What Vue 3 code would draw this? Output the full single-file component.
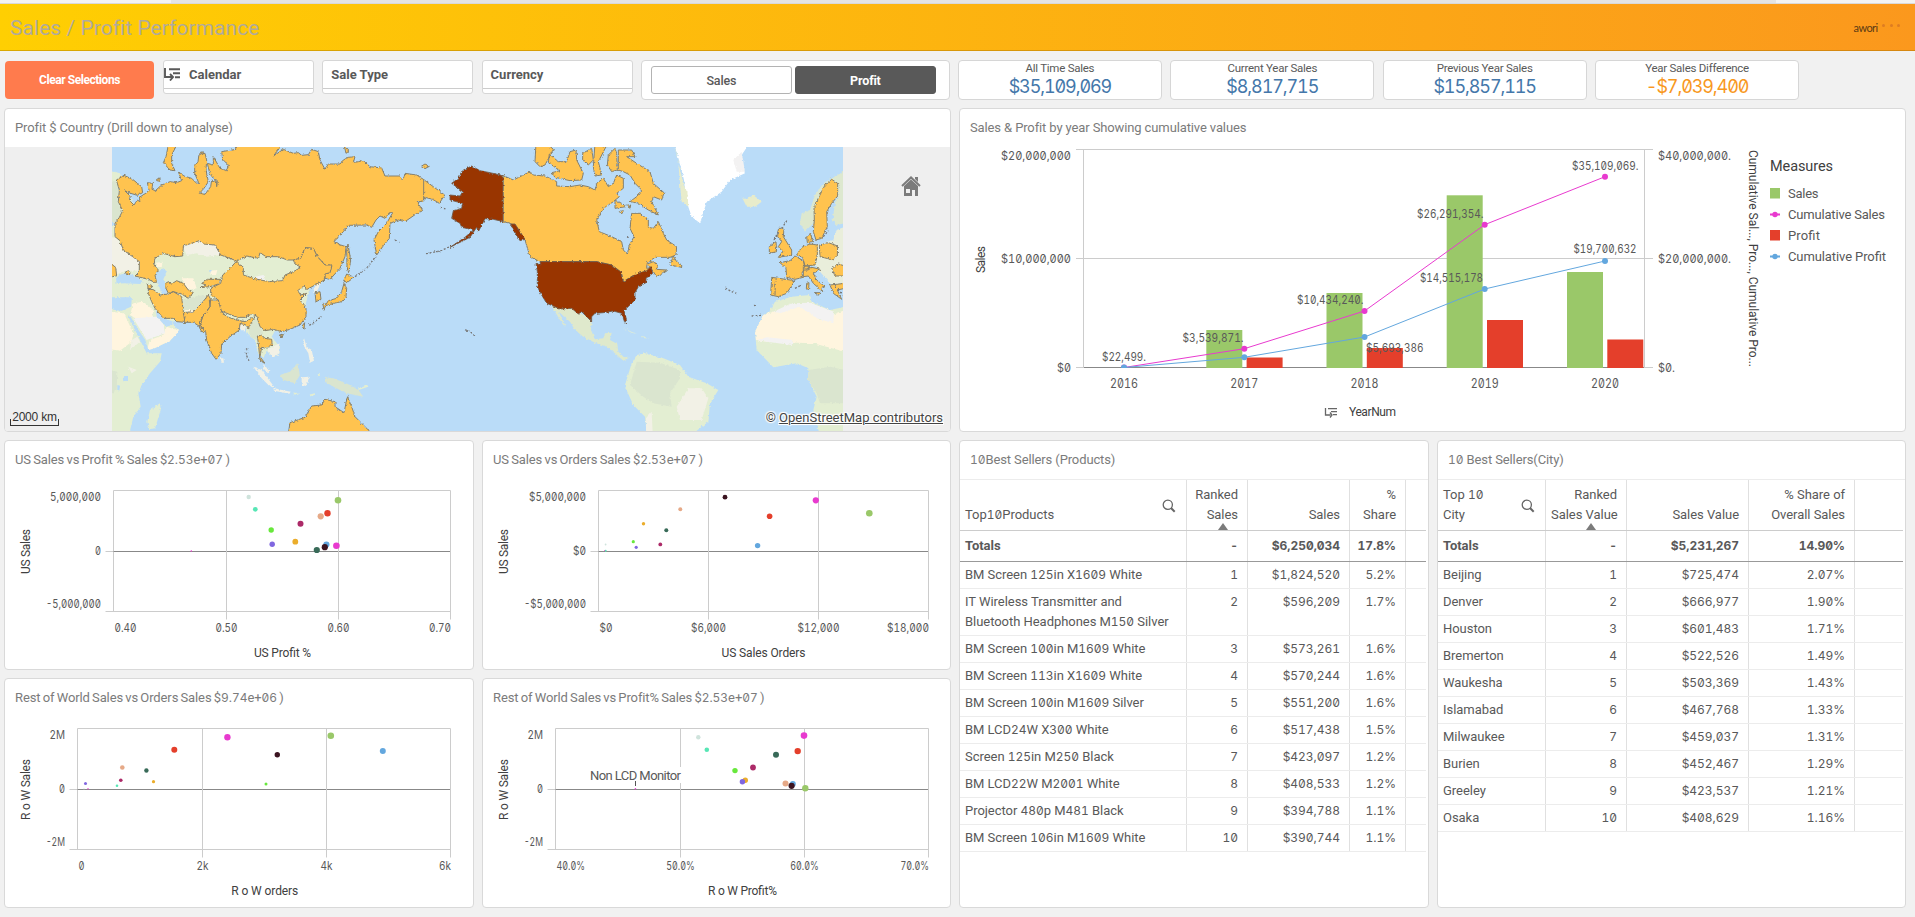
<script setup>
import { h } from 'vue'

// Splits a label so that figures get the slashed-zero numeral face.
const Label = (props) =>
  props.text
    .split(/([\d][\d.,]*)/)
    .filter((p) => p !== '')
    .map((p) => (/^\d/.test(p) ? h(props.tag || 'span', { class: 'fig' }, p) : p))
Label.props = ['text', 'tag']

const filters = [
  { name: 'Calendar', drill: true },
  { name: 'Sale Type' },
  { name: 'Currency' },
]
const kpis = [
  { label: 'All Time Sales', value: '$35,109,069' },
  { label: 'Current Year Sales', value: '$8,817,715' },
  { label: 'Previous Year Sales', value: '$15,857,115' },
  { label: 'Year Sales Difference', value: '-$7,039,400', warn: true },
]

const years = [
  { y: '2016', x: 1124 },
  { y: '2017', x: 1244.3, s: 330, p: 357.5 },
  { y: '2018', x: 1364.5, s: 293, p: 348 },
  { y: '2019', x: 1484.7, s: 195.3, p: 320 },
  { y: '2020', x: 1605, s: 272, p: 339.5 },
]
const cumSales = [[1124, 367.5], [1244.3, 348.7], [1364.5, 311], [1484.7, 224.7], [1605, 176.7]]
const cumProfit = [[1124, 367.5], [1244.3, 357.3], [1364.5, 337], [1484.7, 289], [1605, 261]]
const line = (pts) => pts.map((p) => p.join(',')).join(' ')
const pointLabels = [
  ['$22,499.', 1102, 361, 44], ['$3,539,871.', 1182.5, 342, 61], ['$10,434,240.', 1297, 304, 66.5],
  ['$26,291,354.', 1417, 218, 66.5], ['$14,515,178', 1420, 282, 63], ['$5,693,386', 1366, 352, 57.5],
  ['$35,109,069.', 1572, 170, 66.5], ['$19,700,632', 1573.5, 253, 63],
]
const leftAxis = [['$20,000,000', 160, 70], ['$10,000,000', 263, 70], ['$0', 372, 14]]
const rightAxis = [['$40,000,000.', 160, 73], ['$20,000,000.', 263, 73], ['$0.', 372, 17]]
const legend = [
  ['Sales', '#9ac869', 'bar', 30.5], ['Cumulative Sales', '#e83acf', 'line', 97],
  ['Profit', '#e43f2b', 'bar', 32], ['Cumulative Profit', '#63a7de', 'line', 98],
]

const C = {
  pale: '#cfe3dc', mint: '#57e6b5', olive: '#9ac869', red: '#e43f2b', peach: '#e6a987', wine: '#ac2a68',
  lime: '#68e83c', gold: '#ebad2b', violet: '#8067e0', blue: '#63a7de', pink: '#e83acf', black: '#3b1420', teal: '#386a58',
}
const scatters = [
  {
    title: 'US Sales vs Profit % Sales $2.53e+07 )', tw: 215, ox: 5, oy: 479, x0: 113.5, gx: [226.5, 338.5, 450.5], y0: 490.5,
    yl: [['5,000,000', 51], ['0', 6], ['-5,000,000', 55]], xl: [['0.40', 22], ['0.50', 22], ['0.60', 22], ['0.70', 22]],
    xt: ['US Profit %', 57], yt: ['US Sales', 45], cx: 282.5, ytx: 30,
    pts: [[248.7, 497, 2.2, C.pale], [255.3, 509.3, 2.4, C.mint], [338, 500.2, 3.3, C.olive], [327.5, 513.2, 3.2, C.red],
      [320.7, 516.3, 3.1, C.peach], [300.5, 523.7, 3, C.wine], [271.2, 530, 2.7, C.lime], [295.3, 541.7, 2.9, C.gold],
      [272.2, 544.3, 2.7, C.violet], [326.4, 544.5, 3.1, C.blue], [336.4, 545.7, 3.3, C.pink], [316.8, 550, 3.1, C.teal],
      [324.8, 547.2, 3.1, C.black], [191.3, 551, 0.8, C.pink]],
  },
  {
    title: 'US Sales vs Orders Sales $2.53e+07 )', ox: 483, oy: 479, x0: 598.5, gx: [708.5, 818.5, 928.5], y0: 490.5,
    yl: [['$5,000,000', 57], ['$0', 13], ['-$5,000,000', 62]], xl: [['$0', 13], ['$6,000', 35], ['$12,000', 42], ['$18,000', 42]],
    xt: ['US Sales Orders', 84], yt: ['US Sales', 45], cx: 763.5, ytx: 508,
    pts: [[725, 497.2, 2.4, C.black], [815.8, 500.3, 3.1, C.pink], [680.3, 509.3, 2, C.peach], [869.3, 513.3, 3.3, C.olive],
      [769.6, 516.3, 2.8, C.red], [643.5, 523.7, 1.7, C.gold], [666.3, 530.2, 2, C.teal], [633.3, 541.7, 1.6, C.lime],
      [660.3, 544.4, 1.9, C.wine], [757.6, 545.6, 2.7, C.blue], [636.2, 547.3, 1.6, C.violet], [605.6, 544.5, 0.9, C.pale],
      [605.7, 550.8, 1, C.mint], [604.7, 550.5, 0.5, C.pink]],
  },
  {
    title: 'Rest of World Sales vs Orders Sales $9.74e+06 )', ox: 5, oy: 717, x0: 77.5, gx: [202.5, 326.5, 450.5], y0: 728.5,
    yl: [['2M', 15.5], ['0', 6], ['-2M', 19]], xl: [['0', 6], ['2k', 12], ['4k', 12], ['6k', 12]],
    xt: ['R o W orders', 67], yt: ['R o W Sales', 61], cx: 264.8, ytx: 30,
    pts: [[227.4, 737.3, 3.2, C.pink], [330.8, 735.7, 3.3, C.olive], [382.8, 751, 3, C.blue], [174.3, 749.7, 3, C.red],
      [277.3, 754.8, 2.7, C.black], [122.3, 767.5, 2.3, C.peach], [146.4, 770.5, 2.2, C.teal], [120.8, 780.3, 1.8, C.wine],
      [153.5, 781.7, 1.6, C.gold], [117, 785.7, 1.3, C.mint], [85.5, 783.5, 1.5, C.violet], [266, 784, 1.5, C.lime], [88, 788.8, 0.7, C.pink], [84, 788.8, 0.6, C.pale]],
  },
  {
    title: 'Rest of World Sales vs Profit% Sales $2.53e+07 )', ox: 483, oy: 717, x0: 555.5, gx: [680.5, 804.5, 928.5], y0: 728.5,
    yl: [['2M', 15.5], ['0', 6], ['-2M', 19]], xl: [['40.0%', 28.5], ['50.0%', 28.5], ['60.0%', 28.5], ['70.0%', 28.5]],
    xt: ['R o W Profit%', 69], yt: ['R o W Sales', 61], cx: 742.5, ytx: 508, callout: true,
    pts: [[698.3, 737.3, 2.2, C.pale], [706.8, 749.7, 2.3, C.mint], [804, 735.6, 3.3, C.pink], [797.7, 751.1, 3.2, C.red],
      [776, 754.8, 3, C.teal], [753, 767.5, 2.9, C.wine], [735, 770.6, 2.7, C.lime], [745.3, 780.3, 2.7, C.gold],
      [742.4, 781.7, 2.7, C.violet], [785.5, 783.5, 3, C.peach], [792.8, 784, 3, C.blue], [791.6, 785.8, 3.1, C.black],
      [805.3, 788.3, 3.2, C.olive], [635.4, 788.8, 0.8, C.pink]],
  },
]

const products = {
  kind: 'products', title: '10Best Sellers (Products)',
  head: [['Top10Products'], ['Ranked', 'Sales'], ['Sales'], ['%', 'Share']],
  totals: ['Totals', '-', '$6,250,034', '17.8%'],
  rows: [
    ['BM Screen 125in X1609 White', '1', '$1,824,520', '5.2%'],
    ['IT Wireless Transmitter and Bluetooth Headphones M150 Silver', '2', '$596,209', '1.7%'],
    ['BM Screen 100in M1609 White', '3', '$573,261', '1.6%'],
    ['BM Screen 113in X1609 White', '4', '$570,244', '1.6%'],
    ['BM Screen 100in M1609 Silver', '5', '$551,200', '1.6%'],
    ['BM LCD24W X300 White', '6', '$517,438', '1.5%'],
    ['Screen 125in M250 Black', '7', '$423,097', '1.2%'],
    ['BM LCD22W M2001 White', '8', '$408,533', '1.2%'],
    ['Projector 480p M481 Black', '9', '$394,788', '1.1%'],
    ['BM Screen 106in M1609 White', '10', '$390,744', '1.1%'],
  ],
}
const cities = {
  kind: 'cities', title: '10 Best Sellers(City)',
  head: [['Top 10', 'City'], ['Ranked', 'Sales Value'], ['Sales Value'], ['% Share of', 'Overall Sales']],
  totals: ['Totals', '-', '$5,231,267', '14.90%'],
  rows: [
    ['Beijing', '1', '$725,474', '2.07%'], ['Denver', '2', '$666,977', '1.90%'], ['Houston', '3', '$601,483', '1.71%'],
    ['Bremerton', '4', '$522,526', '1.49%'], ['Waukesha', '5', '$503,369', '1.43%'], ['Islamabad', '6', '$467,768', '1.33%'],
    ['Milwaukee', '7', '$459,037', '1.31%'], ['Burien', '8', '$452,467', '1.29%'], ['Greeley', '9', '$423,537', '1.21%'],
    ['Osaka', '10', '$408,629', '1.16%'],
  ],
}
</script>

<template>
  <div class="page">
    <div class="strip"><i></i></div>
    <header class="banner">
      <h1>Sales / Profit Performance</h1>
      <div class="logo">awori<i></i><i></i><i></i></div>
    </header>

    <div class="toolbar">
      <button class="clear">Clear Selections</button>
      <div v-for="f in filters" :key="f.name" class="filter">
        <div class="filter-name" :class="{ drill: f.drill }">
          <svg v-if="f.drill" width="17" height="13" viewBox="0 0 17 13"><path d="M1 0v9h7M6 6l3 3-3 3.5M5 1.2h11M9 5.2h7M11 9.2h5" fill="none" stroke="#595959" stroke-width="1.9" /></svg>
          <span>{{ f.name }}</span>
        </div>
      </div>
      <div class="switch">
        <button>Sales</button>
        <button class="on">Profit</button>
      </div>
      <div v-for="k in kpis" :key="k.label" class="kpi">
        <span class="kpi-label">{{ k.label }}</span>
        <span class="kpi-value" :class="{ warn: k.warn }">{{ k.value }}</span>
      </div>
    </div>

    <div class="upper">
      <section class="panel wide">
        <h2>Profit $ Country (Drill down to analyse)</h2>
        <div class="map">
          <svg width="945" height="284" viewBox="0 0 2835 852">
            <defs>
              <filter id="coast" x="0" y="0" width="100%" height="100%" filterUnits="userSpaceOnUse">
                <feTurbulence type="fractalNoise" baseFrequency="0.14" numOctaves="2" seed="4" />
                <feDisplacementMap in="SourceGraphic" scale="9" xChannelSelector="R" yChannelSelector="G" />
              </filter>
              <clipPath id="world"><rect x="321" y="0" width="2193" height="852" /></clipPath>
            </defs>
            <rect width="2835" height="852" fill="#efefef" />
            <rect x="321" width="2193" height="852" fill="#badcf8" />
            <g clip-path="url(#world)">
              <g filter="url(#coast)">
                <g transform="translate(-15 -21)">
                  <path fill="#e3eed2" d="M330 92 360 100 450 300 1000 320 975 420 955 432 930 440 905 540 840 575 825 572 815 590 840 622 838 640 820 652 800 632 792 650 775 645 765 600 745 585 735 560 720 550 600 500 520 545 500 538 468 512 470 530 490 552 505 560 518 550 536 572 510 602 465 624 440 632 415 585 376 522 330 515z" />
                  <path fill="#dae5cf" d="M330 120 352 125 368 212 345 250 330 248zM548 480 585 470 610 465 625 470 600 500 575 515 550 512zM745 560 768 535 780 560 790 580 770 600 750 590z" />
                  <path fill="#f2f1e6" d="M330 290 350 295 370 330 418 365 415 392 375 392 345 405 330 360zM548 318 598 302 645 315 662 345 620 350 590 340 560 345zM950 430 965 425 950 455 938 455zM800 630 838 610 838 640 820 652zM720 550 738 560 733 575 720 565z" />
                  <path fill="#fff5df" d="M400 490 430 485 460 510 455 545 430 550 390 525zM450 600 490 585 500 560 538 572 510 602 465 624 440 632zM545 415 580 415 590 445 560 450zM630 392 652 390 648 405 632 405zM468 368 488 365 485 382 470 380zM552 510 580 510 570 520z" />
                  <path fill="#f3f2f2" d="M400 535 470 530 490 552 495 580 440 600zM765 410 790 405 795 420 770 418z" />
                  <path fill="#badcf8" d="M348 415 358 405 380 398 410 410 430 425 420 432 370 430 350 432zM330 472 396 472 393 500 365 512 330 508zM470 398 490 385 501 395 490 418 502 445 500 462 485 465 478 440 466 415zM376 522 392 530 415 570 436 600 445 630 485 628 480 640 448 645 430 622 400 575zM626 392 636 388 632 398zM330 246 347 246 345 258 330 258z" />
                  <path fill="#e3eed2" d="M330 512 380 520 405 570 425 610 440 640 485 640 480 665 450 700 425 735 415 760 422 800 400 830 388 880 330 880zM480 790 482 810 465 865 448 868 442 845 450 810z" />
                  <path fill="#fff5df" d="M330 515 372 520 400 580 395 605 360 632 330 628z" />
                  <path fill="#dae5cf" d="M330 690 352 695 350 750 330 765zM840 705 870 695 892 670 900 705 885 730 850 720zM975 712 1000 715 1050 735 1075 750 1090 770 1040 760 1000 740 975 725z" />
                  <path fill="#badcf8" d="M368 712 384 708 384 722 370 724zM352 735 360 737 358 752 352 748z" />
                  <path fill="#f2f1e6" d="M395 600 412 590 420 605 390 630zM385 680 410 690 395 700zM912 595 920 620 935 630 942 662 930 668 925 640 910 615zM760 680 785 690 820 737 812 742 785 715zM790 672 808 692 803 700 790 685zM820 745 872 755 868 761 822 752zM905 712 930 710 918 738 905 735zM662 655 670 655 672 668 665 668z" />
                  <path fill="none" stroke="#e3eed2" stroke-width="5" d="M1075 748 1104 738M930 766 945 762M880 760 895 762M955 700 958 708" />
                  <g fill="#ffc350" stroke="#85806e" stroke-width="3" stroke-linejoin="round">
                    <path d="M349 120 372 106 398 118 425 140 428 158 412 166 392 160 374 152 390 168 392 185 402 195 412 180 420 185 418 172 440 158 447 150 442 128 458 130 456 148 466 152 485 135 510 125 530 128 545 122 535 95 552 108 575 115 590 130 596 128 584 100 584 78 594 65 597 42 615 40 620 60 618 90 625 125 612 145 598 160 615 163 632 140 635 120 650 125 650 140 652 122 635 110 628 95 622 70 640 75 640 50 660 85 680 92 685 75 668 58 665 35 708 28 712 10 850 10 820 48 850 28 880 40 895 38 905 46 925 44 935 28 955 35 960 60 975 88 985 72 1020 72 1030 60 1045 52 1065 50 1060 68 1090 62 1110 80 1145 84 1155 108 1200 108 1210 120 1215 100 1250 105 1270 118 1300 140 1334 165 1318 190 1298 178 1275 172 1268 184 1252 185 1268 212 1248 222 1215 245 1195 240 1170 250 1168 295 1148 320 1130 345 1122 300 1135 275 1160 250 1178 218 1168 218 1155 235 1140 228 1128 240 1115 262 1100 255 1045 256 1030 275 1002 305 1022 315 1038 320 1035 350 1020 385 990 418 975 415 975 402 990 398 996 375 975 375 952 350 940 325 915 323 902 355 880 360 862 360 835 350 798 350 780 338 775 355 740 348 710 363 690 355 662 345 645 315 610 312 598 302 550 318 548 348 525 350 490 340 465 355 462 375 475 390 465 405 470 430 445 418 405 408 418 395 418 365 398 350 370 330 360 302 345 290 345 250 358 232 368 212 355 185 358 150z" />
                    <path d="M1271 118V184M505 15 530 15 515 45 515 70 525 92 510 90 490 68 498 50zM1265 78 1275 72 1288 79 1275 86zM1032 15 1048 32 1038 40zM470 118 480 114 480 124 470 122zM602 36 610 36 608 44zM376 396 386 392 390 402 380 404zM325 365 347 382 350 408 325 412z" />
                    <path d="M710 363 730 385 730 405 760 415 805 425 848 422 855 405 880 395 903 382 885 372 880 360 902 355 915 323 940 325 952 350 975 375 996 375 990 398 975 402 973 420 945 435 918 450 915 435 893 452 902 465 920 460 900 480 918 505 918 530 900 555 870 568 845 575 820 568 795 572 780 560 770 528 755 522 735 532 710 532 668 518 650 495 655 480 632 462 632 445 662 430 668 405 690 385z" />
                    <path d="M445 445 462 450 480 465 505 462 520 455 545 470 548 500 552 530 555 547 530 545 520 535 490 535 465 505 455 485 445 460zM442 432 455 436 455 448 444 445zM497 430 505 425 515 432 530 422 550 430 565 450 580 458 565 475 545 462 520 455 505 460 498 445zM605 430 625 418 662 418 655 432 630 440 600 443 618 435z" />
                    <path d="M552 547 555 530 550 518 580 515 605 490 625 465 632 478 630 500 608 530 600 555 612 568 580 547zM628 480 655 480 660 500 668 522 710 540 735 545 765 530 745 565 738 555 720 550 718 570 690 590 665 612 663 640 648 658 635 640 620 600 617 575 605 575 597 560 608 530 630 500z" />
                    <path fill="#e3eed2" d="M665 514 712 532 710 540 680 530z" />
                    <path d="M772 588 785 585 795 595 815 598 817 615 800 625 785 622 780 650 795 670 780 660 778 640 775 610zM838 585 850 582 846 594zM906 558 914 548 912 568zM945 458 960 455 963 478 948 485zM1032 430 1040 445 1038 470 1025 485 1000 490 975 498 985 482 1010 475 1025 455zM968 490 978 495 972 508zM1040 402 1062 412 1045 425 1030 425zM1044 312 1052 360 1046 398 1041 380 1040 330z" />
                    <path d="M865 880 870 848 915 832 935 798 965 795 975 778 1005 785 1005 800 1032 818 1042 770 1055 800 1065 830 1115 880z" />
                  </g>
                  <g fill="none" stroke="#777" stroke-width="4" stroke-dasharray="6 5"><path d="M1065 410 1100 385 1128 348M1278 341 1320 333 1350 320M1395 570 1408 573M1412 576 1425 588M928 556 965 530M740 625 739 645 748 665M1185 300 1198 308M1320 202 1338 207" /></g>
                  <path fill="#993404" stroke="#6d5a48" stroke-width="2.5" d="M1415 78 1440 92 1470 98 1510 107 1510 245 1480 238 1455 236 1435 275 1430 262 1410 292 1350 322 1395 292 1420 270 1385 262 1380 250 1355 235 1360 212 1385 205 1388 190 1350 180 1350 165 1380 168 1388 155 1355 130 1375 115 1390 90z" />
                </g>
                <g transform="translate(1425 -21)">
                  <path fill="#e8eccb" d="M582 15 595 60 598 110 605 165 620 190 610 130z" />
                  <path fill="#fff" d="M583 15 805 15 775 60 795 100 750 120 725 155 680 185 660 250 635 230 618 180 612 120 597 60z" />
                  <path fill="#f3f2f2" d="M760 60 785 35 795 95 770 95z" />
                  <path fill="#e8eccb" d="M785 170 800 178 820 165 845 185 825 200 800 200zM600 130 622 150 625 200 605 185z" />
                  <path fill="#dfe9cc" d="M215 498 275 505 320 530 335 545 333 570 345 598 370 595 375 580 395 578 390 600 412 612 415 635 435 655 450 652 430 662 405 640 380 620 345 608 310 590 285 570 270 545 236 515 258 560 240 540z" />
                  <path fill="#e3eed2" d="M430 565 470 582 455 578zM485 588 508 596 490 594zM435 735 455 670 470 645 495 640 550 655 600 675 625 710 680 730 715 750 690 790 685 845 640 880 500 880 495 830 460 795 437 745z" />
                  <path fill="#dae5cf" d="M470 665 540 668 600 690 600 715 570 760 575 800 520 790 490 770 450 735z" />
                  <path fill="#f2f1e6" d="M625 745 665 745 685 775 665 840 600 840 590 800zM498 835 515 815 518 880 498 880z" />
                  <path fill="#e3eed2" d="M868 515 885 485 935 470 990 465 995 485 1050 510 1095 500 1095 880 1018 880 1000 810 1010 770 985 720 985 685 950 670 880 682 830 630 825 575 850 525z" />
                  <path fill="#fff5df" d="M825 575 850 525 880 515 930 498 970 490 1020 540 1095 510 1095 635 1000 610 860 605 828 600z" />
                  <path fill="#f3f2f2" d="M880 515 935 490 990 488 1062 515 1060 550 1010 535 960 500 900 520zM832 600 860 592 940 600 935 615 860 605z" />
                  <path fill="#dae5cf" d="M985 690 1050 680 1095 690 1095 790 1020 790 1010 760 985 720z" />
                  <path fill="#dde8cf" d="M960 250 965 220 990 210 1005 165 1030 130 1095 92 1095 250 1068 255 1058 240 1065 190 1075 165 1060 160 1020 210 1000 250 975 275z" />
                  <path fill="#e9eedb" d="M965 345 1012 315 1060 300 1070 270 1095 260 1095 430 1055 435 1020 395 1000 370z" />
                  <g fill="#ffc350" stroke="#85806e" stroke-width="3" stroke-linejoin="round">
                    <path d="M70 107 100 120 130 105 150 95 160 105 195 108 230 125 230 138 270 140 300 135 325 140 345 150 350 130 370 115 385 140 400 130 410 105 430 115 430 145 410 160 418 170 400 185 385 195 370 205 350 240 358 275 395 290 425 305 430 330 442 342 448 315 462 290 450 265 455 220 480 220 505 240 505 262 520 265 535 245 550 280 560 300 590 320 588 345 570 352 525 352 502 368 500 385 515 382 500 395 465 405 430 425 425 400 395 375 350 365 180 365 150 350 135 300 110 262 90 250 70 245z" />
                    <path d="M208 42 235 65 260 65 270 35 288 30 290 60 310 100 305 120 270 122 225 112 215 98 240 92 205 68zM168 10 200 10 220 28 195 75 180 80 165 65zM308 40 335 25 340 60 325 75 308 60zM345 10 378 20 355 65 365 105 345 108 340 80z" />
                    <path d="M385 45 405 25 410 40 412 90 395 95 382 75zM415 30 455 30 465 50 440 50 470 70 510 95 520 130 552 158 545 180 520 170 515 185 535 225 505 210 475 190 450 185 470 170 485 150 465 130 450 105 430 95 415 90 415 60zM405 180 438 200 405 205zM418 215 430 212 425 222zM440 195 452 195 450 205z" />
                    <path d="M502 372 520 365 535 378 528 388 560 390 530 410 520 395zM570 375 580 348 590 365 605 375 605 382z" />
                    <path d="M1002 200 1035 135 1055 118 1073 130 1073 168 1055 190 1040 215 1042 260 1025 295 1008 300 1000 275 1003 240zM895 265 912 265 910 290 935 330 935 345 895 352 908 335 895 320 905 305 893 290zM868 320 888 305 890 335 868 340zM900 368 930 362 945 348 970 362 975 385 965 400 970 412 945 418 920 412 918 385zM875 412 945 422 920 460 895 470 872 465zM886 425 885 465M950 345 965 322 990 312 1012 315 1012 345 1005 375 975 378 968 352zM980 290 992 280 998 305 982 308zM1018 315 1045 308 1073 318 1072 345 1060 360 1020 350zM970 390 995 382 1022 388 1000 400 1010 420 1035 440 1025 445 1028 455 1000 430 985 408 970 410zM1055 385 1075 372 1095 378 1095 408 1065 408zM1050 435 1095 430 1095 445 1072 450 1085 478 1060 460zM980 430 987 428 986 448 979 446zM1003 458 1020 458 1015 466zM970 378 985 378 985 390 970 390z" />
                  </g>
                  <path fill="none" stroke="#777" stroke-width="4" stroke-dasharray="6 5" d="M736 444 755 455 775 462M815 528 845 526M822 497 830 495M905 265 922 240M895 275 882 300M945 445 965 435M1030 290 1045 272M1065 440 1089 465M442 290 446 296" />
                  <path fill="#993404" stroke="#6d5a48" stroke-width="2.5" d="M180 365 350 365 395 375 422 395 430 425 465 403 500 392 513 380 518 400 498 415 498 428 475 440 465 458 465 480 432 512 440 540 435 550 425 520 400 513 370 518 345 520 335 530 335 545 320 530 305 515 295 522 275 505 240 507 200 490 185 465 172 440 172 395 168 370 182 375zM92 252 105 252 135 298 120 302 105 280z" />
                </g>
              </g>
            </g>
          </svg>
          <div class="scale">2000 km</div>
          <div class="credit">© <u>OpenStreetMap contributors</u></div>
          <svg class="home" width="22" height="22" viewBox="0 0 22 22"><path d="M2 11 11 2.5 20 11" fill="none" stroke="#7b7b7b" stroke-width="2" /><path fill="#7b7b7b" fill-rule="evenodd" d="M15 2h3v5l-3-3zM4 11l7-6.5 7 6.500V21h-3v-6h-3v6H4zM6 14v4h4v-4z" /></svg>
        </div>
      </section>

      <section class="panel wide">
        <h2>Sales &amp; Profit by year Showing cumulative values</h2>
        <svg class="chart" width="945" height="284" viewBox="960 147 945 284">
          <g stroke="#ccc" fill="none"><path d="M1076 149.500H1653M1076 258.500H1653M1076 367.500H1653M1083.500 149V367M1644.500 149V367" /><path stroke="#888" d="M1084 367.500H1644" /></g>
          <g v-for="b in years" :key="b.y">
            <template v-if="b.s">
              <rect :x="b.x - 38" :y="b.s" width="36" :height="368 - b.s" fill="#9ac869" />
              <rect :x="b.x + 2.300" :y="b.p" width="36" :height="368 - b.p" fill="#e43f2b" />
            </template>
            <text class="num year" :x="b.x - 14" y="388" textLength="28" lengthAdjust="spacingAndGlyphs">{{ b.y }}</text>
          </g>
          <polyline :points="line(cumSales)" fill="none" stroke="#e83acf" />
          <circle v-for="p in cumSales" :key="p[0]" :cx="p[0]" :cy="p[1]" r="3" fill="#e83acf" />
          <polyline :points="line(cumProfit)" fill="none" stroke="#63a7de" />
          <circle v-for="p in cumProfit" :key="p[0]" :cx="p[0]" :cy="p[1]" r="3" fill="#63a7de" />
          <rect x="1120" y="368" width="8" height="4" fill="#fff" />
          <text v-for="l in pointLabels" :key="l[0]" class="num" :x="l[1]" :y="l[2]" :textLength="l[3]" lengthAdjust="spacingAndGlyphs">{{ l[0] }}</text>
          <text v-for="l in leftAxis" :key="l[0]" class="num" :x="1071 - l[2]" :y="l[1]" :textLength="l[2]" lengthAdjust="spacingAndGlyphs">{{ l[0] }}</text>
          <text v-for="l in rightAxis" :key="l[0]" class="num" x="1658" :y="l[1]" :textLength="l[2]" lengthAdjust="spacingAndGlyphs">{{ l[0] }}</text>
          <text class="name" transform="translate(984.500 273) rotate(-90)" textLength="27">Sales</text>
          <text class="name" transform="translate(1748.500 150) rotate(90)" textLength="217">Cumulative Sal..., Pro..., Cumulative Pro...</text>
          <path d="M1325.500 408v7h5M1330 412.500l2 2.500-2 2.500M1328 408.700h9M1331 411.700h6M1333 414.700h4" fill="none" stroke="#666" stroke-width="1.300" />
          <text class="name" x="1349" y="416" textLength="47">YearNum</text>
          <text class="name legend-title" x="1770" y="171" textLength="63">Measures</text>
          <g v-for="(l, i) in legend" :key="l[0]" :transform="`translate(0 ${i * 21})`">
            <rect v-if="l[2] === 'bar'" x="1770" y="188" width="10" height="10.500" :fill="l[1]" />
            <g v-else :fill="l[1]"><rect x="1770" y="192.500" width="10" height="2" /><circle cx="1775" cy="193.500" r="2.700" /></g>
            <text x="1788" y="198" font-size="13" :textLength="l[3]">{{ l[0] }}</text>
          </g>
        </svg>
      </section>
    </div>

    <div class="lower">
      <div class="scatters">
        <section v-for="c in scatters" :key="c.title" class="panel">
          <h2 class="tight"><Label :text="c.title" /></h2>
          <svg class="chart" width="468" height="190" :viewBox="`${c.ox} ${c.oy} 468 190`">
            <g stroke="#ccc" fill="none">
              <path :d="`M${c.x0} ${c.y0}V${c.y0 + 121}M${c.x0 - 8} ${c.y0 + 61}H${c.x0}M${c.x0 - 8} ${c.y0 + 121}H${c.gx[2]}M${c.x0} ${c.y0}H${c.gx[2]}`" />
              <path stroke="#888" :d="`M${c.x0} ${c.y0 + 61}H${c.gx[2]}`" />
              <path v-for="g in c.gx" :key="g" :d="`M${g} ${c.y0}v129`" />
            </g>
            <g v-if="c.callout">
              <rect x="588" y="767" width="96" height="16" fill="#fff" />
              <path d="M635.500 781v5" stroke="#555" />
              <text x="590" y="780" font-size="13" textLength="91">Non LCD Monitor</text>
            </g>
            <circle v-for="(p, i) in c.pts" :key="i" :cx="p[0]" :cy="p[1]" :r="p[2]" :fill="p[3]" />
            <text v-for="(l, i) in c.yl" :key="l[0]" class="num" :x="c.x0 - 12.500 - l[1]" :y="c.y0 + 10.500 + i * 53.500" :textLength="l[1]" lengthAdjust="spacingAndGlyphs">{{ l[0] }}</text>
            <text v-for="(l, i) in c.xl" :key="l[0]" class="num" :x="i === 0 ? c.x0 + 1 : i === 3 ? c.gx[2] - l[1] + 0.500 : c.gx[i - 1] - l[1] / 2" :y="c.y0 + 141.500" :textLength="l[1]" lengthAdjust="spacingAndGlyphs">{{ l[0] }}</text>
            <text class="name" :x="c.cx - c.xt[1] / 2" :y="c.y0 + 166.500" :textLength="c.xt[1]">{{ c.xt[0] }}</text>
            <text class="name" :transform="`translate(${c.ytx} ${c.y0 + 61 + c.yt[1] / 2}) rotate(-90)`" :textLength="c.yt[1]">{{ c.yt[0] }}</text>
          </svg>
        </section>
      </div>

      <section v-for="t in [products, cities]" :key="t.kind" class="panel tall" :class="t.kind">
        <h2><Label :text="t.title" /></h2>
        <div class="table">
          <div class="row head">
            <div v-for="(c, i) in t.head" :key="i" class="cell">
              <div v-for="s in c" :key="s"><Label :text="s" /></div>
              <svg v-if="i === 0" class="search" width="14" height="14" viewBox="0 0 14 14"><circle cx="5.800" cy="5.800" r="4.600" fill="none" stroke="#666" stroke-width="1.300" /><path d="M9 9l3.700 3.700" stroke="#666" stroke-width="2" /></svg>
              <i v-if="i === 1" class="sort"></i>
            </div>
            <div class="cell"></div>
          </div>
          <div class="row totals">
            <div v-for="(c, i) in t.totals" :key="i" class="cell" :class="{ value: i }">{{ c }}</div>
            <div class="cell"></div>
          </div>
          <div v-for="r in t.rows" :key="r[0]" class="row">
            <div class="cell"><Label :text="r[0]" /></div>
            <div v-for="i in 3" :key="i" class="cell value">{{ r[i] }}</div>
            <div class="cell"></div>
          </div>
        </div>
      </section>
    </div>
  </div>
</template>

<style>
body { background: #f1f1f1; overflow: hidden; }
.fig { font-family: Inter, sans-serif; font-size: 0.92em; line-height: 1; font-feature-settings: 'zero', 'tnum'; letter-spacing: 0; }
</style>

<style scoped>
.page { width: 1915px; height: 917px; background: #f1f1f1; font-family: Roboto, sans-serif; color: #595959; box-sizing: border-box; overflow: hidden; }
.page * { box-sizing: border-box; }
.strip { height: 4px; background: #f3f3f3; border-bottom: 1px solid #d9d9d9; padding-left: 171px; }
.strip i { display: block; width: 1605px; height: 3px; background: #e4e4e4; }
.banner { height: 47px; background: linear-gradient(90deg, #ffcf02, #fb981d); border-bottom: 1px solid rgba(160, 110, 0, 0.4); display: flex; align-items: center; justify-content: space-between; padding: 0 15px 0 10px; }
h1 { margin: 2px 0 0; font-size: 21px; font-weight: 400; color: #b0aa9c; letter-spacing: 0.05px; }
.logo { display: flex; align-items: center; gap: 4px; font: 11px Lato, sans-serif; letter-spacing: -0.6px; color: #5c3a14; }
.logo i { width: 3px; height: 3px; border-radius: 50%; background: #de7d22; margin: -4px 0 0 0.5px; }

.toolbar { display: flex; align-items: flex-start; padding: 9px 0 0 5px; height: 57px; }
button { font: inherit; padding: 0; cursor: pointer; }
.clear { width: 149px; height: 38px; margin: 1px 9px 0 0; border: 0; border-radius: 4px; background: #ff7b4d; color: #fff; font-size: 12px; font-weight: 700; letter-spacing: -0.45px; }
.filter { width: 151px; height: 34px; margin-right: 8.300px; background: #fff; border: 1px solid #d6d6d6; border-radius: 3px; }
.filter-name { height: 28px; border-bottom: 1px solid #ccc; padding-left: 8px; font-size: 13px; font-weight: 700; line-height: 27px; display: flex; align-items: center; }
.filter-name.drill { padding: 0; gap: 8px; }
.switch { width: 309px; height: 40px; margin-right: 8px; background: #fff; border: 1px solid #d6d6d6; border-radius: 4px; padding: 5px 9px; display: flex; gap: 3px; }
.switch button { width: 141px; height: 28px; border: 1px solid #b3b3b3; border-radius: 3px; background: #fff; color: #595959; font-size: 12.500px; font-weight: 500; letter-spacing: -0.15px; }
.switch .on { background: #595959; border-color: #595959; color: #fff; font-weight: 700; }
.kpi { width: 204px; height: 40px; margin-right: 8.400px; background: #fff; border: 1px solid #d6d6d6; border-radius: 4px; display: flex; flex-direction: column; align-items: center; }
.kpi-label { font-size: 11.500px; line-height: 15px; height: 15px; letter-spacing: -0.25px; }
.kpi-value { font-family: Inter, sans-serif; font-feature-settings: 'zero', 'tnum'; font-size: 18px; line-height: 22px; font-weight: 400; letter-spacing: -1.1px; color: #4477aa; }
.kpi-value.warn { color: #f8981d; }

.panel { background: #fff; border: 1px solid #d9d9d9; border-radius: 4px; overflow: hidden; display: flex; flex-direction: column; }
h2 { margin: 0; height: 38px; flex: none; padding-left: 10px; font-size: 13px; font-weight: 400; line-height: 38px; letter-spacing: -0.12px; color: #7b7b7b; white-space: nowrap; }
.tight { word-spacing: -0.8px; }
.upper { display: flex; gap: 8px; padding-left: 4px; height: 332px; }
.wide { width: 947px; height: 324px; }
.map { position: relative; height: 284px; }
.map > svg { display: block; }
.scale { position: absolute; left: 5px; bottom: 5px; width: 49px; height: 15px; border: solid #333; border-width: 0 1px 1px; font: 12px/13px "Liberation Sans", sans-serif; letter-spacing: -0.2px; text-align: center; color: #333; }
.scale::before { content: ''; position: absolute; left: -1px; right: -1px; top: 0; height: 8px; border: solid #efefef; border-width: 0 1px; }
.credit { position: absolute; right: 7px; bottom: 4px; font: 13px/18px Roboto, sans-serif; color: #444; text-shadow: 0 0 2px #fff, 1px 1px 1px #fff, -1px -1px 1px #fff, 1px -1px 1px #fff, -1px 1px 1px #fff; }
.map .home { position: absolute; right: 28px; top: 28px; }
.chart { display: block; font-size: 12px; fill: #595959; }
.chart .num { font-family: Inter, sans-serif; font-feature-settings: 'zero', 'tnum'; font-size: 11.500px; }
.chart .year { font-size: 12.500px; }
.chart .name { fill: #404040; }
.chart .legend-title { font-size: 14.500px; }

.lower { display: flex; gap: 8px; padding-left: 4px; }
.scatters { width: 947px; display: grid; grid-template-columns: 470px 469px; grid-auto-rows: 230px; gap: 8px; }
.tall { width: 470px; height: 468px; }
.cities { width: 469px; }
.table { border-top: 1px solid #ececec; font-size: 13px; line-height: 20px; padding-right: 2px; letter-spacing: -0.04px; }
.row { display: grid; border-bottom: 1px solid #ececec; min-height: 27px; }
.products .row { grid-template-columns: 227px 61px 102px 56px 1fr; }
.cities .row { grid-template-columns: 108px 81px 122px 106px 1fr; }
.cell { border-right: 1px solid #e0e0e0; padding: 3px 9px 3px 5px; position: relative; }
.cell:last-child { border-right: 0; }
.cell:not(:first-child) { text-align: right; }
.value { font-family: Inter, sans-serif; font-feature-settings: 'zero', 'tnum'; font-size: 12px; }
.head { height: 51px; border-bottom-color: #ccc; }
.head .cell { display: flex; flex-direction: column; justify-content: flex-end; padding-bottom: 5px; white-space: nowrap; }
.totals { height: 31px; border-bottom-color: #999; font-weight: 700; }
.totals .cell { padding-top: 5px; }
.search { position: absolute; right: 10px; top: 19px; }
.sort { position: absolute; right: 19px; bottom: 0; border: solid transparent; border-width: 0 5px 7px; border-bottom-color: #7b7b7b; }
.cities .sort { right: 30px; }
</style>
